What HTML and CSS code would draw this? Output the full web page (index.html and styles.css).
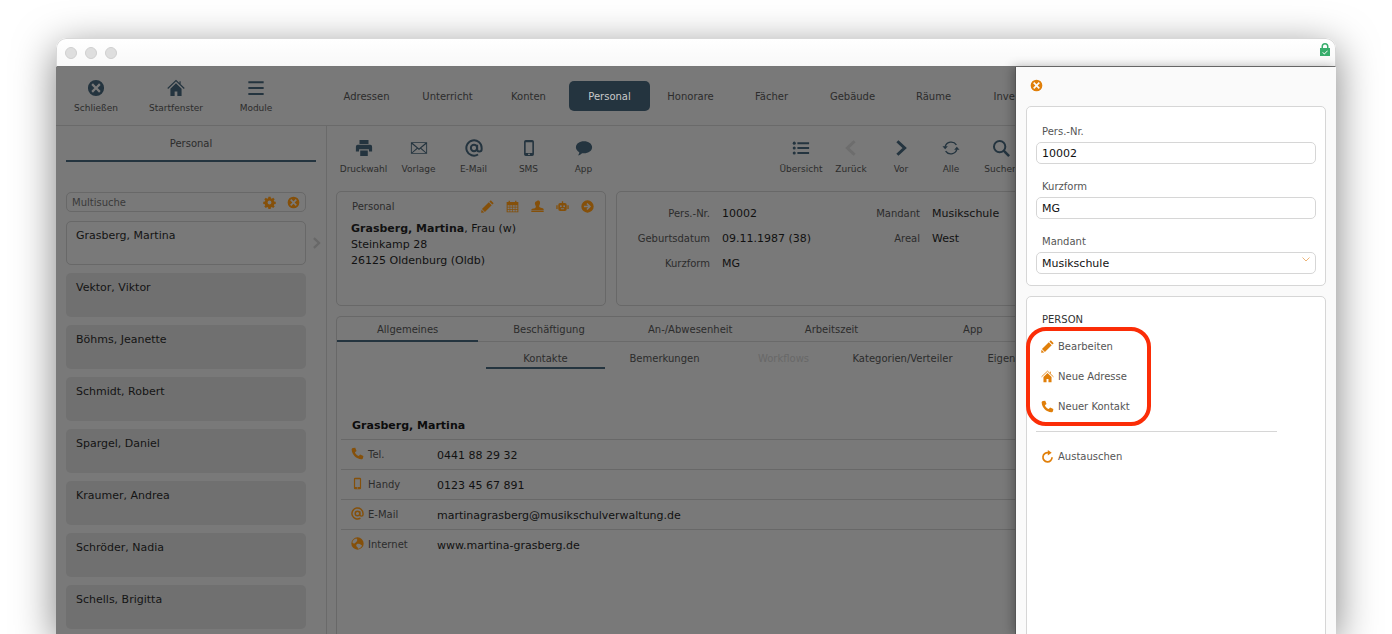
FILE: index.html
```html
<!DOCTYPE html>
<html lang="de">
<head>
    <meta charset="UTF-8">
    <meta name="viewport" content="width=device-width, initial-scale=1.0">
    <title>Personal</title>
    <link rel="stylesheet" href="styles.css">
</head>
<body>

<svg class="defs" width="0" height="0">
    <symbol id="i-close" viewBox="0 0 20 20"><path fill="currentColor" fill-rule="evenodd" d="M10 1a9 9 0 1 0 0 18a9 9 0 0 0 0-18zM6.600 4.800L10 8.200l3.400-3.400l1.800 1.800L11.800 10l3.400 3.400l-1.800 1.800L10 11.800l-3.400 3.400l-1.800-1.800L8.200 10L4.800 6.600z"/></symbol>
    <symbol id="i-home" viewBox="0 0 20 20"><path fill="none" stroke="currentColor" stroke-width="1.300" d="M.8 10.500L10 1.800l9.200 8.700M14.500 5.500V2.500"/><path fill="currentColor" d="M10 4.800L3.800 10.700V19h4.700v-5.200h3V19h4.700v-8.300z"/></symbol>
    <symbol id="i-menu" viewBox="0 0 20 20"><path fill="currentColor" d="M1.500 2.500h17v2.200h-17zM1.500 9h17v2.200h-17zM1.500 15.500h17v2.200h-17z"/></symbol>
    <symbol id="i-gear" viewBox="0 0 20 20"><path fill="currentColor" fill-rule="evenodd" d="M8.300 1h3.400l.4 2.500l1.500.6l2-1.500l2.400 2.400l-1.500 2l.6 1.500l2.500.4v3.400l-2.500.4l-.6 1.500l1.500 2l-2.400 2.400l-2-1.500l-1.500.6l-.4 2.500H8.300l-.4-2.500l-1.500-.6l-2 1.500l-2.400-2.400l1.500-2l-.6-1.500l-2.500-.4V8.900l2.500-.4l.6-1.500l-1.500-2l2.400-2.400l2 1.500l1.500-.6zM10 7a3 3 0 1 0 0 6a3 3 0 0 0 0-6z"/></symbol>
    <symbol id="i-print" viewBox="0 0 20 20"><path fill="currentColor" d="M5 1h10v4.500H5zM3 6.500h14a2 2 0 0 1 2 2V14h-3.500v-2.500h-11V14H1V8.500a2 2 0 0 1 2-2zM5.800 12.800h8.400V19H5.800z"/></symbol>
    <symbol id="i-mail" viewBox="0 0 20 20"><path fill="currentColor" fill-rule="evenodd" d="M1 3.500h18v13H1zM3 4.500l7 6l7-6zM2 5.500v9.500L7.500 10.100zM18 5.500l-5.500 4.600L18 15zM8.400 10.900L2.800 15.500h14.400l-5.600-4.600L10 12.300z"/></symbol>
    <symbol id="i-at" viewBox="0 0 20 20"><g fill="none" stroke="currentColor" stroke-width="2.200"><circle cx="10" cy="10" r="3.500"/><path d="M13.500 6.500V11.500a2.500 2.500 0 0 0 5 0V10a8.500 8.500 0 1 0-4 7.200"/></g></symbol>
    <symbol id="i-phone" viewBox="0 0 20 20"><path fill="currentColor" fill-rule="evenodd" d="M6.500 1h7a2 2 0 0 1 2 2v14a2 2 0 0 1-2 2h-7a2 2 0 0 1-2-2V3a2 2 0 0 1 2-2zM6.300 3.500v12h7.400v-12zM9 16.300v1.500h2v-1.500z"/></symbol>
    <symbol id="i-chat" viewBox="0 0 20 20"><path fill="currentColor" d="M10 2.500c5 0 9 2.900 9 6.700s-4 6.700-9 6.700c-.8 0-1.500-.1-2.200-.2C6.600 17.100 5 18 3.200 18c1-1 1.500-2 1.600-3.400C2.500 13.400 1 11.400 1 9.200C1 5.400 5 2.500 10 2.500z"/></symbol>
    <symbol id="i-list" viewBox="0 0 20 20"><path fill="currentColor" d="M6 3.500h13v2.200H6zM6 9h13v2.200H6zM6 14.500h13v2.200H6z"/><circle fill="currentColor" cx="2.500" cy="4.600" r="1.700"/><circle fill="currentColor" cx="2.500" cy="10.100" r="1.700"/><circle fill="currentColor" cx="2.500" cy="15.600" r="1.700"/></symbol>
    <symbol id="i-prev" viewBox="0 0 20 20"><path fill="none" stroke="currentColor" stroke-width="3.400" d="M14 2.500L6 10l8 7.500"/></symbol>
    <symbol id="i-next" viewBox="0 0 20 20"><path fill="none" stroke="currentColor" stroke-width="3.400" d="M6 2.500L14 10l-8 7.500"/></symbol>
    <symbol id="i-sync" viewBox="0 0 20 20"><path fill="none" stroke="currentColor" stroke-width="1.500" d="M3.500 8.500A7 7 0 0 1 16 6.500M16.500 11.500A7 7 0 0 1 4 13.500"/><path fill="currentColor" d="M.5 8h6l-3 3.500zM19.500 12h-6l3-3.500z"/></symbol>
    <symbol id="i-search" viewBox="0 0 20 20"><g fill="none" stroke="currentColor"><circle cx="8.500" cy="8.500" r="6.300" stroke-width="2.200"/><path stroke-width="2.800" d="M13 13l6 6"/></g></symbol>
    <symbol id="i-pencil" viewBox="0 0 20 20"><path fill="currentColor" d="M15 .5l4.500 4.500l-2 2L13 2.500zM12 3.500L16.500 8L6 18.500L1.500 14zM.8 15l4.200 4.200L.2 19.800z"/></symbol>
    <symbol id="i-calendar" viewBox="0 0 20 20"><path fill="currentColor" fill-rule="evenodd" d="M1 3h3V1h2v2h8V1h2v2h3v16H1zM2.500 8v2.500h3V8zM6.500 8v2.500h3V8zM10.500 8v2.500h3V8zM14.500 8v2.500h3V8zM2.500 11.500V14h3v-2.500zM6.500 11.500V14h3v-2.500zM10.500 11.500V14h3v-2.500zM14.500 11.500V14h3v-2.500zM2.500 15v2.500h3V15zM6.500 15v2.500h3V15zM10.500 15v2.500h3V15zM14.500 15v2.500h3V15z"/></symbol>
    <symbol id="i-stamp" viewBox="0 0 20 20"><path fill="currentColor" d="M10 .5a4 4 0 0 1 4 4c0 2-1.500 3-1.500 5c0 1 .5 1.500 1.500 2l4 1c1 .3 1.500 .9 1.500 1.800V16H.5v-.7c0-.9 .5-1.500 1.500-1.800l4-1c1-.5 1.500-1 1.500-2c0-2-1.500-3-1.500-5a4 4 0 0 1 4-4zM.5 16.800h19v1.700H.5z"/></symbol>
    <symbol id="i-robot" viewBox="0 0 20 20"><path fill="currentColor" fill-rule="evenodd" d="M9 2h2v2.500h2.500a3 3 0 0 1 3 3V14a3 3 0 0 1-3 3h-7a3 3 0 0 1-3-3V7.500a3 3 0 0 1 3-3H9zM7.500 8a1.500 1.500 0 1 0 0 3a1.500 1.500 0 0 0 0-3zM12.500 8a1.500 1.500 0 1 0 0 3a1.500 1.500 0 0 0 0-3zM7.500 12.800v1.400h5v-1.400zM.5 8h2v6h-2zM17.500 8h2v6h-2z"/></symbol>
    <symbol id="i-arrow" viewBox="0 0 20 20"><path fill="currentColor" fill-rule="evenodd" d="M10 .5a9.500 9.500 0 1 0 0 19a9.500 9.500 0 0 0 0-19zM10 4.500l5.500 5.500l-5.500 5.500l-1.700-1.700l2.500-2.600H4.500V8.800h6.300L8.300 6.200z"/></symbol>
    <symbol id="i-call" viewBox="0 0 20 20"><path fill="currentColor" d="M3 1.500L6.500 1l2 5L6 8c.8 2.500 3.200 5 6 6l2-2.500l5 2.200l-.5 3.300c-.3 1.300-1.300 2-2.500 2C8 18.500 1.500 12 1 4c0-1.200.8-2.200 2-2.500z"/></symbol>
    <symbol id="i-globe" viewBox="0 0 20 20"><path fill="currentColor" fill-rule="evenodd" d="M10 .5a9.500 9.500 0 1 0 0 19a9.500 9.500 0 0 0 0-19zM8 2.300C5 3 2.800 5.300 2 8c1 1.500 3 2.500 4 1.500S8 8 9 6.500s1-3-1-4.200zM12 10.500c-2-.5-4 .5-4 2.500s2 2 2.500 3.500c.2 .8 0 1.200 0 1.500c3-.2 5.500-2.300 6.500-5c-1.500-.5-3-2-5-2.500z"/></symbol>
    <symbol id="i-redo" viewBox="0 0 20 20"><path fill="none" stroke="currentColor" stroke-width="2.600" d="M11.500 4.300A7 7 0 1 0 17 11"/><path fill="currentColor" d="M10.500 0v8.500L16.500 4.200z"/></symbol>
    <symbol id="i-lock" viewBox="0 0 10 13"><path fill="currentColor" fill-rule="evenodd" d="M5 0a3.500 3.500 0 0 1 3.500 3.500V5H10v8H0V5h1.500V3.500A3.500 3.500 0 0 1 5 0zM5 1.500a2 2 0 0 0-2 2V5h4V3.500a2 2 0 0 0-2-2zM7.300 7.500L4.300 10.500L2.800 9l-.5 .5l2 2l3.500-3.500z"/></symbol>
</svg>

<div class="window">
    <div class="titlebar">
        <span class="dot"></span><span class="dot"></span><span class="dot"></span>
        <svg class="lock"><use href="#i-lock"/></svg>
    </div>

    <div class="app">
        <header class="topbar">
            <div class="mainbtns">
                <div class="tool tool-main"><svg class="ic18"><use href="#i-close"/></svg><span>Schließen</span></div>
                <div class="tool tool-main"><svg class="ic18"><use href="#i-home"/></svg><span>Startfenster</span></div>
                <div class="tool tool-main"><svg class="ic18"><use href="#i-menu"/></svg><span>Module</span></div>
            </div>
            <nav class="modules">
                <a>Adressen</a>
                <a>Unterricht</a>
                <a>Konten</a>
                <a class="active">Personal</a>
                <a>Honorare</a>
                <a>Fächer</a>
                <a>Gebäude</a>
                <a>Räume</a>
                <a>Inventar</a>
            </nav>
        </header>

        <div class="columns">
            <aside class="sidebar">
                <div class="side-tab">Personal</div>
                <div class="multisearch">
                    <span>Multisuche</span>
                    <svg class="ic13 acc"><use href="#i-gear"/></svg>
                    <svg class="ic13 acc"><use href="#i-close"/></svg>
                </div>
                <div class="person selected">Grasberg, Martina<svg class="side-arrow"><use href="#i-next"/></svg></div>
                <div class="person">Vektor, Viktor</div>
                <div class="person">Böhms, Jeanette</div>
                <div class="person">Schmidt, Robert</div>
                <div class="person">Spargel, Daniel</div>
                <div class="person">Kraumer, Andrea</div>
                <div class="person">Schröder, Nadia</div>
                <div class="person">Schells, Brigitta</div>
            </aside>

            <main class="content">
                <div class="toolbar">
                    <div class="toolgroup">
                        <div class="tool"><svg class="ic18"><use href="#i-print"/></svg><span>Druckwahl</span></div>
                        <div class="tool"><svg class="ic18"><use href="#i-mail"/></svg><span>Vorlage</span></div>
                        <div class="tool"><svg class="ic18"><use href="#i-at"/></svg><span>E-Mail</span></div>
                        <div class="tool"><svg class="ic18"><use href="#i-phone"/></svg><span>SMS</span></div>
                        <div class="tool"><svg class="ic18"><use href="#i-chat"/></svg><span>App</span></div>
                    </div>
                    <div class="toolgroup nav">
                        <div class="tool"><svg class="ic18"><use href="#i-list"/></svg><span>Übersicht</span></div>
                        <div class="tool off"><svg class="ic18"><use href="#i-prev"/></svg><span>Zurück</span></div>
                        <div class="tool"><svg class="ic18"><use href="#i-next"/></svg><span>Vor</span></div>
                        <div class="tool"><svg class="ic18"><use href="#i-sync"/></svg><span>Alle</span></div>
                        <div class="tool"><svg class="ic18"><use href="#i-search"/></svg><span>Suchen</span></div>
                    </div>
                </div>

                <div class="cards">
                    <section class="card card-person">
                        <div class="card-head">
                            <span>Personal</span>
                            <div class="card-icons">
                                <svg class="ic13 acc"><use href="#i-pencil"/></svg>
                                <svg class="ic13 acc"><use href="#i-calendar"/></svg>
                                <svg class="ic13 acc"><use href="#i-stamp"/></svg>
                                <svg class="ic13 acc"><use href="#i-robot"/></svg>
                                <svg class="ic13 acc"><use href="#i-arrow"/></svg>
                            </div>
                        </div>
                        <p class="address"><b>Grasberg, Martina</b>, Frau (w)<br>Steinkamp 28<br>26125 Oldenburg (Oldb)</p>
                    </section>
                    <section class="card card-data">
                        <label>Pers.-Nr.</label><span>10002</span><label>Mandant</label><span>Musikschule</span>
                        <label>Geburtsdatum</label><span>09.11.1987 (38)</span><label>Areal</label><span>West</span>
                        <label>Kurzform</label><span>MG</span>
                    </section>
                </div>

                <section class="card card-tabs">
                    <div class="tabs">
                        <a class="active">Allgemeines</a>
                        <a>Beschäftigung</a>
                        <a>An-/Abwesenheit</a>
                        <a>Arbeitszeit</a>
                        <a>App</a>
                    </div>
                    <div class="subtabs">
                        <a class="active">Kontakte</a>
                        <a>Bemerkungen</a>
                        <a class="off">Workflows</a>
                        <a>Kategorien/Verteiler</a>
                        <a>Eigene Felder</a>
                    </div>
                    <h4 class="contact-name">Grasberg, Martina</h4>
                    <div class="contact"><svg class="ic13 acc"><use href="#i-call"/></svg><label>Tel.</label><span>0441 88 29 32</span></div>
                    <div class="contact"><svg class="ic13 acc"><use href="#i-phone"/></svg><label>Handy</label><span>0123 45 67 891</span></div>
                    <div class="contact"><svg class="ic13 acc"><use href="#i-at"/></svg><label>E-Mail</label><span>martinagrasberg@musikschulverwaltung.de</span></div>
                    <div class="contact"><svg class="ic13 acc"><use href="#i-globe"/></svg><label>Internet</label><span>www.martina-grasberg.de</span></div>
                </section>
            </main>
        </div>

        <div class="panel">
            <svg class="panel-close"><use href="#i-close"/></svg>
            <div class="panel-card fields">
                <label>Pers.-Nr.</label>
                <div class="field">10002</div>
                <label>Kurzform</label>
                <div class="field">MG</div>
                <label>Mandant</label>
                <div class="field select">Musikschule
                    <svg class="caret" viewBox="0 0 8 5"><path fill="none" stroke="currentColor" d="M.5 .5L4 4L7.500 .5"/></svg>
                </div>
            </div>
            <div class="panel-card actions">
                <h5>PERSON</h5>
                <div class="marked">
                    <div class="action"><svg class="ic13"><use href="#i-pencil"/></svg>Bearbeiten</div>
                    <div class="action"><svg class="ic13"><use href="#i-home"/></svg>Neue Adresse</div>
                    <div class="action"><svg class="ic13"><use href="#i-call"/></svg>Neuer Kontakt</div>
                    <div class="marker"></div>
                </div>
                <hr>
                <div class="action"><svg class="ic13"><use href="#i-redo"/></svg>Austauschen</div>
            </div>
        </div>
    </div>
</div>

</body>
</html>
```

FILE: styles.css
```css
html, body {
    margin: 0;
    height: 634px;
    overflow: hidden;
    background: #fff;
}
body {
    font-family: "DejaVu Sans", Verdana, sans-serif;
    font-size: 11px;
    color: #111;
}
.defs {
    position: absolute;
}
svg {
    display: block;
    flex: none;
}
.ic18 { width: 18px; height: 18px; }
.ic13 { width: 13px; height: 13px; }
.acc { color: #85500a; }

.window {
    width: 1280px;
    height: 596px;
    margin: 38px 0 0 56px;
    border-radius: 10px 10px 0 0;
    box-shadow: 0 10px 40px rgba(0, 0, 0, 0.5);
    position: relative;
    overflow: hidden;
}
.titlebar {
    height: 29px;
    box-sizing: border-box;
    padding: 8px 8px 0;
    display: flex;
    gap: 8px;
    background: linear-gradient(#fff, #f8f8f8);
    border: 1px solid #d8d8d8;
    border-bottom: 1px solid #777;
    border-radius: 10px 10px 0 0;
}
.dot {
    width: 12px;
    height: 12px;
    box-sizing: border-box;
    border-radius: 50%;
    background: #dedede;
    border: 1px solid #cfcfcf;
}
.lock {
    width: 10px;
    height: 13px;
    margin: -4px -3px 0 auto;
    color: #37ad6b;
}

.app {
    position: relative;
    height: 567px;
    background: #797979;
    color: #1a1a1a;
}
.topbar {
    height: 58px;
    display: flex;
    border-bottom: 1px solid #6a6a6a;
}
.mainbtns {
    display: flex;
    width: 270px;
}
.tool {
    width: 55px;
    display: flex;
    flex-direction: column;
    align-items: center;
    font-size: 9px;
    color: #2c2c2c;
    white-space: nowrap;
}
.tool svg {
    color: #24343f;
}
.tool span {
    margin-top: 7px;
}
.tool-main {
    width: 80px;
    padding-top: 12px;
}
.tool-main span {
    margin-top: 6px;
}
.modules {
    display: flex;
    padding-top: 14px;
}
.modules a {
    width: 81px;
    height: 30px;
    line-height: 32px;
    text-align: center;
    font-size: 10px;
    color: #2c2c2c;
    overflow: hidden;
    white-space: nowrap;
}
.modules a.active {
    background: #24343f;
    color: #c9c9c9;
    border-radius: 5px;
}

.columns {
    display: flex;
    height: 508px;
    overflow: hidden;
}
.sidebar {
    width: 271px;
    flex: none;
    box-sizing: border-box;
    padding: 0 20px 0 10px;
    border-right: 1px solid #6a6a6a;
}
.side-tab {
    width: 250px;
    height: 34px;
    line-height: 35px;
    text-align: center;
    font-size: 10px;
    color: #2c2c2c;
    border-bottom: 2px solid #24343f;
    margin-bottom: 30px;
}
.multisearch {
    width: 240px;
    height: 20px;
    box-sizing: border-box;
    border: 1px solid #686868;
    border-radius: 5px;
    padding: 0 5px 0 5px;
    display: flex;
    align-items: center;
    gap: 11px;
    font-size: 10px;
    color: #3a3a3a;
    margin-bottom: 9px;
}
.multisearch span {
    flex: 1;
}
.person {
    position: relative;
    width: 240px;
    height: 44px;
    box-sizing: border-box;
    padding: 8px 10px;
    background: #707070;
    border-radius: 5px;
    margin-bottom: 8px;
    font-size: 11px;
    color: #141414;
}
.person.selected {
    background: #797979;
    border: 1px solid #686868;
    padding: 7px 9px;
}
.side-arrow {
    position: absolute;
    left: 243px;
    top: 14px;
    width: 13px;
    height: 14px;
    color: #686868;
}

.content {
    flex: 1;
    padding: 0 0 0 9px;
    min-width: 0;
}
.toolbar {
    display: flex;
    justify-content: space-between;
    height: 65px;
    padding: 13px 310px 0 0;
    box-sizing: border-box;
}
.toolgroup {
    display: flex;
}
.toolgroup.nav .tool {
    width: 50px;
}
.tool.off svg {
    color: #6d6d6d;
}
.cards {
    display: flex;
    gap: 10px;
}
.card {
    border: 1px solid #686868;
    border-radius: 5px;
    box-sizing: border-box;
}
.card-person {
    width: 270px;
    height: 115px;
    padding: 8px 11px 0 14px;
}
.card-head {
    display: flex;
    justify-content: space-between;
    font-size: 10px;
    color: #2c2c2c;
    line-height: 14px;
    margin-left: 1px;
}
.card-icons {
    display: flex;
    gap: 12px;
}
.address {
    margin: 7px 0 0;
    line-height: 16px;
    color: #111;
}
.card-data {
    flex: 1;
    height: 115px;
    margin-right: -10px;
    padding: 9px 0 0;
    display: grid;
    grid-template-columns: 93px 130px 56px 1fr;
    column-gap: 12px;
    grid-auto-rows: 25px;
    align-items: center;
    color: #111;
}
.card-data label {
    text-align: right;
    font-size: 10px;
    color: #2c2c2c;
    margin-top: -1px;
}
.card-tabs {
    margin-top: 10px;
    width: 700px;
    height: 340px;
    border-bottom: 0;
}
.tabs {
    display: flex;
    height: 25px;
}
.tabs a {
    width: 141.3px;
    flex: none;
    text-align: center;
    font-size: 10px;
    line-height: 25px;
    color: #2c2c2c;
    box-sizing: border-box;
    border-bottom: 1px solid #6a6a6a;
}
.tabs a.active {
    border-bottom: 2px solid #24343f;
}
.subtabs {
    display: flex;
    padding-left: 149px;
    height: 27px;
}
.subtabs a {
    width: 119px;
    flex: none;
    text-align: center;
    font-size: 10px;
    line-height: 33px;
    color: #2c2c2c;
    white-space: nowrap;
    box-sizing: border-box;
}
.subtabs a.active {
    border-bottom: 2px solid #24343f;
}
.subtabs a.off {
    color: #686868;
}
.contact-name {
    margin: 50px 0 0 15px;
    font-size: 11px;
    line-height: 14px;
    color: #0c0c0c;
}
.contact {
    margin-left: 4px;
    height: 30px;
    box-sizing: border-box;
    border-top: 1px solid #686868;
    padding-left: 10px;
    display: flex;
    align-items: center;
    color: #111;
}
.contact label {
    width: 73px;
    padding-left: 4px;
    box-sizing: border-box;
    flex: none;
    font-size: 10px;
    color: #2c2c2c;
}
.contact span {
    margin-top: 2px;
}
.contact svg {
    margin-top: -2px;
}
.contact-name + .contact {
    margin-top: 6px;
}

.panel {
    position: absolute;
    top: 0;
    right: 0;
    bottom: 0;
    width: 321px;
    box-sizing: border-box;
    padding: 0 10px;
    background: #fafafa;
    border-left: 1px solid #555;
    box-shadow: -2px 0 10px rgba(0, 0, 0, 0.3);
    color: #111;
}
.panel-close {
    width: 13px;
    height: 13px;
    margin: 12px 0 14px 4px;
    color: #e07f0a;
}
.panel-card {
    background: #fff;
    border: 1px solid #d6d6d6;
    border-radius: 5px;
    margin-bottom: 10px;
    padding: 0 9px;
}
.fields {
    height: 180px;
    box-sizing: border-box;
    padding-top: 18px;
}
.fields label {
    display: block;
    font-size: 10px;
    line-height: 14px;
    padding-left: 6px;
    margin-bottom: 3px;
    color: #555;
}
.field {
    position: relative;
    height: 22px;
    box-sizing: border-box;
    border: 1px solid #d6d6d6;
    border-radius: 5px;
    padding: 0 5px;
    line-height: 21px;
    margin-bottom: 16px;
}
.field.select {
    line-height: 22px;
}
.caret {
    position: absolute;
    right: 5px;
    top: 4px;
    width: 8px;
    height: 5px;
    color: #edb477;
}
.actions {
    height: 400px;
    box-sizing: border-box;
    padding-top: 16px;
}
.actions h5 {
    margin: 0 0 4px;
    padding-left: 6px;
    font-weight: normal;
    font-size: 10px;
    line-height: 14px;
    color: #333;
}
.marked {
    position: relative;
}
.action {
    height: 30px;
    display: flex;
    align-items: center;
    gap: 4px;
    padding-left: 5px;
    font-size: 10px;
    color: #555;
}
.action svg {
    color: #e07f0a;
}
.marker {
    position: absolute;
    left: -10px;
    top: -4px;
    width: 125px;
    height: 99px;
    box-sizing: border-box;
    border: 4px solid #fb2d07;
    border-radius: 20px;
}
.actions hr {
    width: 241px;
    margin: 10px 0 9px;
    border: 0;
    border-top: 1px solid #d6d6d6;
}
```
